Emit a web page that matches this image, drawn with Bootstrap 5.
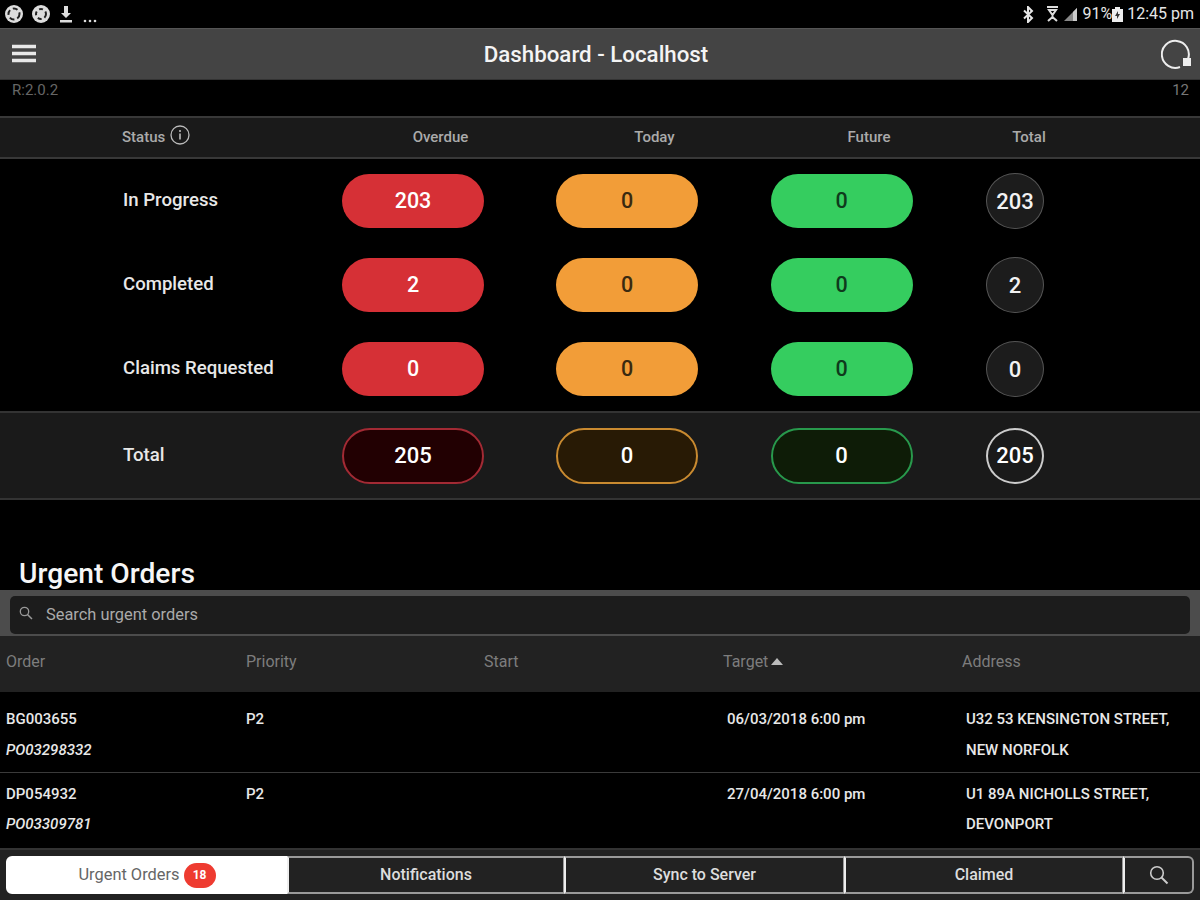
<!DOCTYPE html>
<html lang="en">
<head>
<meta charset="utf-8">
<title>Dashboard - Localhost</title>
<link href="https://cdn.jsdelivr.net/npm/bootstrap@5.3.0/dist/css/bootstrap.min.css" rel="stylesheet">
<style>
html,body{height:900px;overflow:hidden;background:#000;}
body{font-family:Roboto,"Liberation Sans",sans-serif;color:#fff;}
.screen{height:900px;}
.sysbar{height:28px;padding:0 6px 0 5px;font-size:15px;color:#e6e6e6;}
.sysbar .clock{font-size:16px;}
.sysleft{gap:5px;}
.appbar{height:52px;background:#444;border-top:1px solid #555;border-bottom:1px solid #333;padding:0 7px 0 11px;}
.appbar h1{font-size:22.3px;font-weight:500;margin:0;position:absolute;left:0;right:8px;text-align:center;color:#f4f4f4;}
.verrow{height:36px;padding:0 11px 0 12px;font-size:15px;color:#666;line-height:20px;}
.verrow .rnum{color:#777;}
.gridrow{display:grid;grid-template-columns:306px 214px 214px 215px 132px;align-items:center;justify-items:center;}
.gridrow .lbl{justify-self:start;padding-left:122px;}
.statushead{height:43px;background:#1a1a1a;border-top:2px solid #383838;border-bottom:2px solid #383838;font-size:15px;font-weight:500;color:#aaa;}
.statushead .lbl{display:flex;align-items:center;gap:5px;margin-top:-1px;}
.statushead .shift{padding-left:55px;}
.statushead .shifttot{padding-left:28px;}
.datarow{height:84px;font-size:18.6px;font-weight:500;color:#e8e8e8;}
.datarow .lbl,.totalrow .lbl{padding-left:123px;}
.datarows{height:252px;}
.pillv{width:142px;height:54px;border-radius:27px;display:flex;align-items:center;justify-content:center;font-size:21.5px;font-weight:500;}
.roundv{width:58px;height:56px;border-radius:50%;display:flex;align-items:center;justify-content:center;font-size:22px;font-weight:500;background:#1c1c1c;border:1px solid #555;color:#f2f2f2;}
.p-red{background:#d63036;color:#fff;}
.p-org{background:#f29d38;color:#3a2a10;}
.p-grn{background:#35cd5f;color:#0f3a1c;}
.totalrow{height:89px;background:#1a1a1a;border-top:2px solid #333;border-bottom:2px solid #333;font-size:18.6px;font-weight:500;color:#e8e8e8;}
.totalrow .pillv{height:56px;border-radius:28px;font-size:22px;color:#fff;border-width:2px;border-style:solid;}
.t-red{background:#220002;border-color:#a32a34;}
.t-org{background:#281a05;border-color:#c98a30;}
.t-grn{background:#0e1c07;border-color:#28994c;}
.totalrow .roundv{background:#1a1a1a;border:2px solid #ccc;color:#fff;}
.uo-title{height:90px;padding-left:19px;font-size:28.2px;font-weight:500;line-height:32px;color:#f6f6f6;}
.searchwrap{height:46px;background:#4c4c4c;padding:6px 10px 2px 10px;}
.searchbox{height:38px;background:#1c1c1c;border-radius:5px;padding-left:9px;gap:13px;color:#aaa;font-size:16.4px;}
.orders{table-layout:fixed;width:100%;margin:0;--bs-table-bg:transparent;--bs-table-color:#e8e8e8;}
.orders th{width:239px;height:56px;background:#222;color:#7d7d7d;font-weight:400;font-size:16px;padding:0 0 4px 6px;vertical-align:middle;border:0;}
.orders th:first-child{width:240px;}
.orders th:nth-child(2){width:238px;}
.orders th:last-child{width:auto;}
.orders td{padding:12px 0 0 6px;height:80px;font-size:15px;font-weight:500;line-height:30.5px;color:#e8e8e8;vertical-align:top;border-bottom:1px solid #3a3a3a;}
.orders tr.tight td{padding-top:6px;}
.orders td.ind{padding-left:10px;}
.orders td em{font-style:italic;}
.caretup{display:inline-block;width:0;height:0;border-left:6px solid transparent;border-right:6px solid transparent;border-bottom:7px solid #bbb;margin-left:3px;vertical-align:2px;}
.tabbar{height:52px;background:#222;padding:6px 6px 4px;position:absolute;left:0;right:0;bottom:0;border-top:2px solid #333;}
.tabs{height:38px;}
.tabs .btn{border:2px solid #9a9a9a;border-radius:0;background:#222;color:#ddd;font-size:16px;font-weight:500;padding:0;display:flex;align-items:center;justify-content:center;gap:4px;margin-left:-1px;flex:none;border-left-color:#eee;}
.tabs .btn.first{width:282px;background:#fff;color:#666;font-weight:400;font-size:16.4px;border-color:#fff;border-radius:6px 0 0 6px;margin-left:0;}
.tabs .btn.w-notif{width:278px;}
.tabs .btn.w-sync{width:281px;}
.tabs .btn.w-claim{width:280px;}
.tabs .btn.last{flex:1;border-radius:0 6px 6px 0;}
.cnt{background:#ee3b30;color:#fff;font-size:12px;font-weight:700;width:32px;height:25px;border-radius:13px;display:flex;align-items:center;justify-content:center;}
</style>
</head>
<body>
<div class="screen d-flex flex-column position-relative">
  <div class="sysbar d-flex align-items-center justify-content-between">
    <div class="d-flex align-items-center sysleft">
      <svg width="18" height="18" viewBox="0 0 18 18"><circle cx="9" cy="9" r="9" fill="#ddd"/><circle cx="9" cy="9" r="5.500" fill="none" stroke="#222" stroke-width="2" stroke-dasharray="5 3"/></svg>
      <svg width="18" height="18" viewBox="0 0 18 18" class="ms-1"><circle cx="9" cy="9" r="9" fill="#ddd"/><circle cx="9" cy="9" r="5" fill="none" stroke="#222" stroke-width="2" stroke-dasharray="4 3"/></svg>
      <svg width="14" height="17" viewBox="0 0 14 17" class="ms-1"><path d="M5 0h4v7h3l-5 5-5-5h3z" fill="#ddd"/><rect x="1" y="14" width="12" height="2.500" fill="#ddd"/></svg>
      <svg width="16" height="17" viewBox="0 0 16 17" class="ms-1"><circle cx="3" cy="15" r="1.300" fill="#ddd"/><circle cx="8" cy="15" r="1.300" fill="#ddd"/><circle cx="13" cy="15" r="1.300" fill="#ddd"/></svg>
    </div>
    <div class="d-flex align-items-center">
      <svg width="12" height="17" viewBox="0 0 12 17" class="me-2"><path d="M2 4.500l8 7.500-4 4V1l4 4-8 7.500" fill="none" stroke="#e6e6e6" stroke-width="2"/></svg>
      <svg width="13" height="16" viewBox="0 0 13 16" class="ms-1"><path d="M1 1h11M3 4h7L6.500 9zM6.500 9v3M2 15l4.500-4 4.500 4" fill="none" stroke="#ddd" stroke-width="2"/></svg>
      <svg width="15" height="15" viewBox="0 0 15 15" class="ms-1"><path d="M14 1v13H1z" fill="#888"/><path d="M14 1v13h-4V5z" fill="#ccc"/></svg>
      <span class="clock ms-1">91%</span>
      <svg width="11" height="15" viewBox="0 0 11 15"><path d="M0 2h3V0h5v2h3v13H0z" fill="#eee"/><path d="M6 4 3 9h2v3l3-5H6z" fill="#333"/></svg>
      <span class="clock ms-1">12:45 pm</span>
    </div>
  </div>
  <header class="appbar d-flex align-items-center justify-content-between position-relative">
    <svg width="26" height="22" viewBox="0 0 26 22"><path d="M1 3.500h24M1 10.500h24M1 17.500h24" stroke="#e8e8e8" stroke-width="3.500"/></svg>
    <h1>Dashboard - Localhost</h1>
    <svg width="32" height="32" viewBox="0 0 32 32"><path d="M27 21A13.500 13.500 0 1 0 19 29" fill="none" stroke="#eee" stroke-width="2"/><rect x="22" y="20" width="8" height="8" fill="#eee"/></svg>
  </header>
  <div class="verrow d-flex justify-content-between"><span>R:2.0.2</span><span class="rnum">12</span></div>
  <div class="statushead gridrow">
    <div class="lbl">Status
      <svg width="20" height="20" viewBox="0 0 20 20" class="mb-1"><circle cx="10" cy="10" r="9" fill="none" stroke="#bbb" stroke-width="1.300"/><path d="M10 8.500v6M10 5v2" stroke="#bbb" stroke-width="1.600"/></svg>
    </div>
    <div class="shift">Overdue</div><div class="shift">Today</div><div class="shift">Future</div><div class="shifttot">Total</div>
  </div>
  <div class="datarows">
    <div class="gridrow datarow"><div class="lbl">In Progress</div><div class="pillv p-red">203</div><div class="pillv p-org">0</div><div class="pillv p-grn">0</div><div class="roundv">203</div></div>
    <div class="gridrow datarow"><div class="lbl">Completed</div><div class="pillv p-red">2</div><div class="pillv p-org">0</div><div class="pillv p-grn">0</div><div class="roundv">2</div></div>
    <div class="gridrow datarow"><div class="lbl">Claims Requested</div><div class="pillv p-red">0</div><div class="pillv p-org">0</div><div class="pillv p-grn">0</div><div class="roundv">0</div></div>
  </div>
  <div class="gridrow totalrow"><div class="lbl">Total</div><div class="pillv t-red">205</div><div class="pillv t-org">0</div><div class="pillv t-grn">0</div><div class="roundv">205</div></div>
  <div class="uo-title d-flex align-items-end">Urgent Orders</div>
  <div class="searchwrap">
    <div class="searchbox d-flex align-items-center">
      <svg width="14" height="14" viewBox="0 0 14 14" class="mb-1"><circle cx="5.500" cy="5.500" r="4.200" fill="none" stroke="#999" stroke-width="1.300"/><path d="M8.500 8.500l4.500 4.500" stroke="#999" stroke-width="1.500"/></svg>
      <span>Search urgent orders</span>
    </div>
  </div>
  <table class="table orders">
    <thead><tr><th>Order</th><th>Priority</th><th>Start</th><th>Target<span class="caretup"></span></th><th>Address</th></tr></thead>
    <tbody>
      <tr><td>BG003655<br><em>PO03298332</em></td><td>P2</td><td></td><td class="ind">06/03/2018 6:00 pm</td><td class="ind">U32 53 KENSINGTON STREET,<br>NEW NORFOLK</td></tr>
      <tr class="tight"><td>DP054932<br><em>PO03309781</em></td><td>P2</td><td></td><td class="ind">27/04/2018 6:00 pm</td><td class="ind">U1 89A NICHOLLS STREET,<br>DEVONPORT</td></tr>
    </tbody>
  </table>
  <footer class="tabbar">
    <div class="btn-group w-100 tabs" role="group">
      <button type="button" class="btn first">Urgent Orders <span class="cnt">18</span></button>
      <button type="button" class="btn w-notif">Notifications</button>
      <button type="button" class="btn w-sync">Sync to Server</button>
      <button type="button" class="btn w-claim">Claimed</button>
      <button type="button" class="btn last" aria-label="Search"><svg width="20" height="20" viewBox="0 0 20 20"><circle cx="8" cy="8" r="6.300" fill="none" stroke="#ccc" stroke-width="1.600"/><path d="M12.500 12.500l6 6" stroke="#ccc" stroke-width="2"/></svg></button>
    </div>
  </footer>
</div>
</body>
</html>
